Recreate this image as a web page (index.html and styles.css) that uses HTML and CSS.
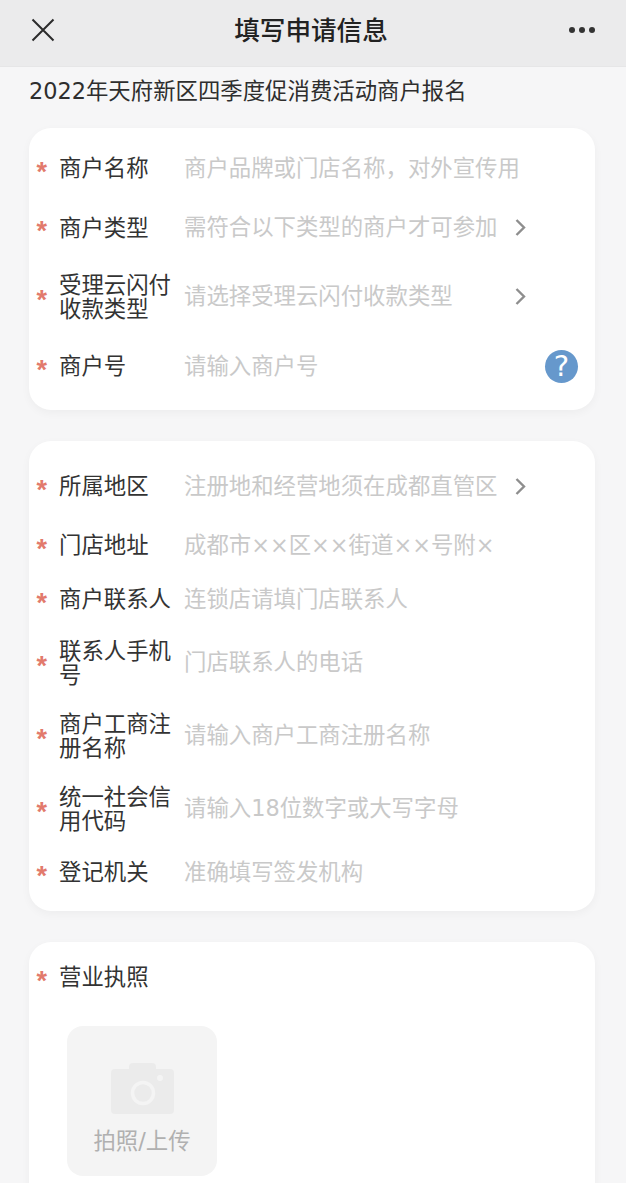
FILE: index.html
```html
<!DOCTYPE html>
<html lang="zh">

<head>
    <meta charset="UTF-8">
    <meta name="viewport" content="width=device-width, initial-scale=1.0">
    <title>填写申请信息</title>
    <link rel="stylesheet" href="styles.css">
</head>

<body>
    <div class="page">
        <div class="topbar">
            <svg class="close-icon" width="24" height="24" viewBox="0 0 24 24">
                <path d="M1.5 1.5L22.5 22.5M22.5 1.5L1.5 22.5" fill="none" stroke="#2b2b2b" stroke-width="2" />
            </svg>
            <h1>填写申请信息</h1>
            <div class="more"><span></span><span></span><span></span></div>
        </div>

        <p class="activity">2022年天府新区四季度促消费活动商户报名</p>

        <div class="card card-first">
            <div class="row">
                <span class="star">*</span>
                <label for="shopName">商户名称</label>
                <input type="text" id="shopName" placeholder="商户品牌或门店名称，对外宣传用">
            </div>
            <div class="row">
                <span class="star">*</span>
                <label>商户类型</label>
                <div class="picker">需符合以下类型的商户才可参加</div>
                <svg class="arrow" width="11" height="39" viewBox="0 0 11 39">
                    <path d="M1.5 12L9 19.5L1.5 27" fill="none" stroke="#8e8e8e" stroke-width="2.4" />
                </svg>
            </div>
            <div class="row">
                <span class="star">*</span>
                <label>受理云闪付收款类型</label>
                <div class="picker">请选择受理云闪付收款类型</div>
                <svg class="arrow" width="11" height="39" viewBox="0 0 11 39">
                    <path d="M1.5 12L9 19.5L1.5 27" fill="none" stroke="#8e8e8e" stroke-width="2.4" />
                </svg>
            </div>
            <div class="row">
                <span class="star">*</span>
                <label for="shopNo">商户号</label>
                <input type="text" id="shopNo" placeholder="请输入商户号">
                <span class="help">?</span>
            </div>
        </div>

        <div class="card">
            <div class="row">
                <span class="star">*</span>
                <label>所属地区</label>
                <div class="picker">注册地和经营地须在成都直管区</div>
                <svg class="arrow" width="11" height="39" viewBox="0 0 11 39">
                    <path d="M1.5 12L9 19.5L1.5 27" fill="none" stroke="#8e8e8e" stroke-width="2.4" />
                </svg>
            </div>
            <div class="row">
                <span class="star">*</span>
                <label for="address">门店地址</label>
                <input type="text" id="address" placeholder="成都市××区××街道××号附×">
            </div>
            <div class="row">
                <span class="star">*</span>
                <label for="contact">商户联系人</label>
                <input type="text" id="contact" placeholder="连锁店请填门店联系人">
            </div>
            <div class="row">
                <span class="star">*</span>
                <label for="phone">联系人手机号</label>
                <input type="text" id="phone" placeholder="门店联系人的电话">
            </div>
            <div class="row">
                <span class="star">*</span>
                <label for="regName">商户工商注册名称</label>
                <input type="text" id="regName" placeholder="请输入商户工商注册名称">
            </div>
            <div class="row">
                <span class="star">*</span>
                <label for="creditCode">统一社会信用代码</label>
                <input type="text" id="creditCode" placeholder="请输入18位数字或大写字母">
            </div>
            <div class="row">
                <span class="star">*</span>
                <label for="authority">登记机关</label>
                <input type="text" id="authority" placeholder="准确填写签发机构">
            </div>
        </div>

        <div class="card">
            <div class="row row-title">
                <span class="star">*</span>
                <label>营业执照</label>
            </div>
            <div class="upload">
                <svg width="63" height="51" viewBox="0 0 63 51">
                    <path d="M4 6H18V4Q18 0 22 0H41Q45 0 45 4V6H59Q63 6 63 10V47Q63 51 59 51H4Q0 51 0 47V10Q0 6 4 6Z" fill="#ebebeb" />
                    <circle cx="32" cy="30" r="10.5" fill="none" stroke="#f4f4f4" stroke-width="3.5" />
                    <circle cx="49" cy="15" r="3" fill="#f4f4f4" />
                </svg>
                <span>拍照/上传</span>
            </div>
        </div>
    </div>
</body>
</html>
```

FILE: styles.css
```css
html, body {
    margin: 0;
    padding: 0;
}
body {
    font-family: "DejaVu Sans", "Noto Sans CJK SC", sans-serif;
    background-color: #f6f6f7;
    color: #333;
}
.page {
    height: 100vh;
    overflow: hidden;
}
.topbar {
    height: 67px;
    display: flex;
    align-items: center;
    justify-content: space-between;
    padding: 0 31px 6px 31px;
    box-sizing: border-box;
    background: #ebebec;
    border-bottom: 1px solid #e6e6e7;
}
.topbar h1 {
    margin: 2px 2px 0 0;
    font-size: 25.6px;
    font-weight: 500;
    line-height: 36px;
    color: #222;
}
.more {
    display: flex;
    gap: 4px;
}
.more span {
    width: 6px;
    height: 6px;
    border-radius: 50%;
    background: #333;
}
.activity {
    margin: 0 0 22px;
    padding: 9px 29px 0;
    font-size: 22.4px;
    line-height: 30px;
    color: #2e2e2e;
}
.card {
    margin: 0 31px 31px 29px;
    padding: 13px 0 12px;
    background: #fff;
    border-radius: 22px;
    box-shadow: 0 3px 10px rgba(0, 0, 0, 0.04);
}
.row {
    display: flex;
    align-items: center;
    padding: 12.5px 17px 12.5px 0;
    font-size: 22.4px;
    line-height: 24px;
}
.card-first .row {
    padding-top: 12.8px;
    padding-bottom: 12.8px;
}
.row-title {
    padding-top: 7.5px;
    padding-bottom: 7.5px;
}
.star {
    width: 30px;
    height: 29px;
    padding-left: 7.5px;
    box-sizing: border-box;
    flex: none;
    color: #e27a6c;
    font-family: "Liberation Sans", sans-serif;
    font-size: 27px;
    font-weight: bold;
    line-height: 36px;
}
.row label {
    width: 112px;
    flex: none;
    margin-right: 13px;
    color: #333;
}
.row input, .picker {
    flex: 1;
    min-width: 0;
    height: 29px;
    padding: 0;
    border: none;
    outline: none;
    background: none;
    font-family: inherit;
    font-size: 22.4px;
    line-height: 29px;
    color: #c9c9c9;
}
.row input::placeholder {
    color: #c9c9c9;
    opacity: 1;
}
.arrow {
    flex: none;
    margin-right: 52px;
}
.help {
    width: 33px;
    height: 33px;
    margin: 3px 0;
    flex: none;
    border-radius: 50%;
    background: #6698cc;
    color: #fff;
    font-size: 29px;
    line-height: 33px;
    text-align: center;
}
.upload {
    width: 150px;
    height: 150px;
    margin: 27px 0 30px 38px;
    display: flex;
    flex-direction: column;
    align-items: center;
    padding-top: 37px;
    box-sizing: border-box;
    border-radius: 16px;
    background: #f4f4f4;
}
.upload span {
    margin-top: 10px;
    font-size: 22.4px;
    line-height: 34px;
    color: #b0b0b0;
}
```
